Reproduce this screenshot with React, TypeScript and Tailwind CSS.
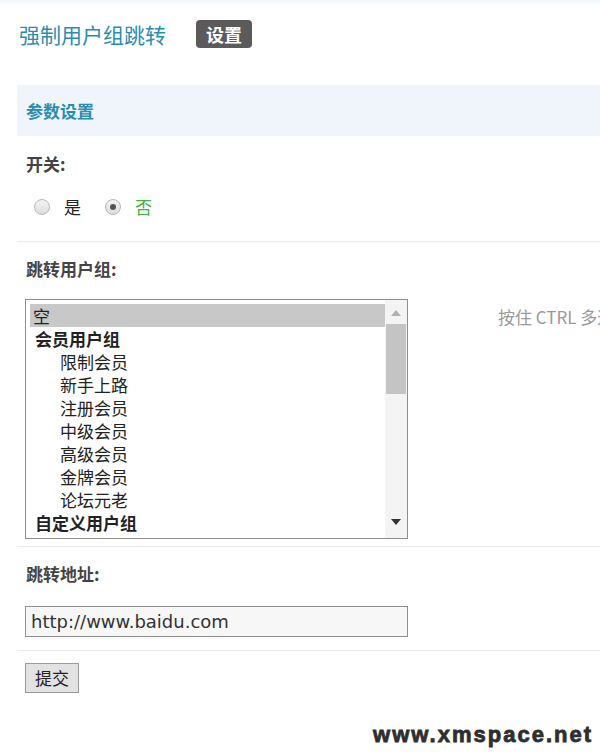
const groups = [
  { name: "会员用户组", items: ["限制会员", "新手上路", "注册会员", "中级会员", "高级会员", "金牌会员", "论坛元老"] },
  { name: "自定义用户组", items: ["版主"] },
];

const cjk = "font-['Microsoft_YaHei','Noto_Sans_CJK_SC',sans-serif]";

function Radio({ checked, label, green }: { checked?: boolean; label: string; green?: boolean }) {
  return (
    <label className="flex items-center gap-[14px]">
      <span className="flex h-[16px] w-[16px] items-center justify-center rounded-full border border-[#b8b8b8] bg-gradient-to-b from-[#f4f4f4] to-[#dcdcdc]">
        {checked && <span className="h-[6px] w-[6px] rounded-full bg-[#555]" />}
      </span>
      <span className={green ? "text-[#3cb43c]" : "text-[#222]"}>{label}</span>
    </label>
  );
}

function ListBox() {
  return (
    <div className="flex h-[240px] w-[383px] shrink-0 overflow-hidden border border-[#8e8e8e] bg-white">
      <div className="flex-1 overflow-hidden pl-[4px] pt-[4px] text-[17px] leading-[23px] text-[#222]">
        <div className="bg-[#c8c8c8] pl-[3px]">空</div>
        {groups.map((g) => (
          <div key={g.name}>
            <div className="pl-[5px] font-bold">{g.name}</div>
            {g.items.map((it) => (
              <div key={it} className="pl-[30px]">
                {it}
              </div>
            ))}
          </div>
        ))}
      </div>
      <div className="flex w-[22px] flex-col items-center bg-[#f4f4f4] py-[6px]">
        <svg width="10" height="6" viewBox="0 0 10 6" className="mt-[4px]">
          <path d="M0 6 L5 0 L10 6 Z" fill="#b0b0b0" />
        </svg>
        <div className="mt-[8px] h-[70px] w-[20px] bg-[#c4c4c4]" />
        <div className="flex-1" />
        <svg width="10" height="6" viewBox="0 0 10 6" className="mb-[7px]">
          <path d="M0 0 L10 0 L5 6 Z" fill="#333" />
        </svg>
      </div>
    </div>
  );
}

export default function App() {
  return (
    <div className={`relative h-[755px] w-[600px] overflow-hidden bg-white ${cjk}`}>
      <div className="h-[6px] bg-gradient-to-b from-[#f3f7fb] to-white" />
      <div className="flex items-center gap-[30px] pl-[19px] pt-[14px]">
        <h1 className="text-[21px] leading-[28px] text-[#2a8db0]">强制用户组跳转</h1>
        <span className="rounded-[4px] bg-[#5c5a5b] px-[10px] text-[18px] font-bold leading-[28px] text-white">设置</span>
      </div>

      <div className="ml-[17px] mt-[37px] flex h-[51px] items-center bg-[#eff5fb] pl-[9px]">
        <span className="text-[17px] font-bold text-[#2a8db0]">参数设置</span>
      </div>

      <div className="ml-[17px] text-[17px]">
        <div className="border-b border-[#ebebeb] pb-[23px]">
          <div className="pl-[9px] pt-[16px] font-bold leading-[24px] text-[#444]">开关:</div>
          <div className="mt-[20px] flex items-center gap-[24px] pl-[17px] text-[17px] leading-[22px]">
            <Radio label="是" />
            <Radio checked green label="否" />
          </div>
        </div>

        <div className="border-b border-[#ebebeb] pb-[7px]">
          <div className="pl-[9px] pt-[15px] font-bold leading-[24px] text-[#444]">跳转用户组:</div>
          <div className="mt-[18px] flex items-start pl-[8px]">
            <ListBox />
            <span className="ml-[90px] mt-[5px] whitespace-nowrap text-[17px] text-[#999]">按住 CTRL 多选</span>
          </div>
        </div>

        <div className="border-b border-[#ebebeb] pb-[13px]">
          <div className="pl-[9px] pt-[15px] font-bold leading-[24px] text-[#444]">跳转地址:</div>
          <div className="mt-[20px] pl-[8px]">
            <div className="flex h-[31px] w-[383px] items-center border border-[#8e8e8e] bg-[#f7f7f7] pl-[5px] font-['DejaVu_Sans',sans-serif] text-[18px] text-[#333]">
              http://www.baidu.com
            </div>
          </div>
        </div>

        <div className="pl-[8px] pt-[12px]">
          <button className="h-[30px] w-[54px] border border-[#9a9a9a] bg-[#e2e2e2] text-[17px] text-[#222]">提交</button>
        </div>
      </div>

      <div className="absolute bottom-[4px] right-[7px] font-['Liberation_Sans',sans-serif] text-[22px] font-black tracking-[2px] text-[#2e2e2e] [-webkit-text-stroke:0.8px_#2e2e2e]">
        www.xmspace.net
      </div>
    </div>
  );
}
